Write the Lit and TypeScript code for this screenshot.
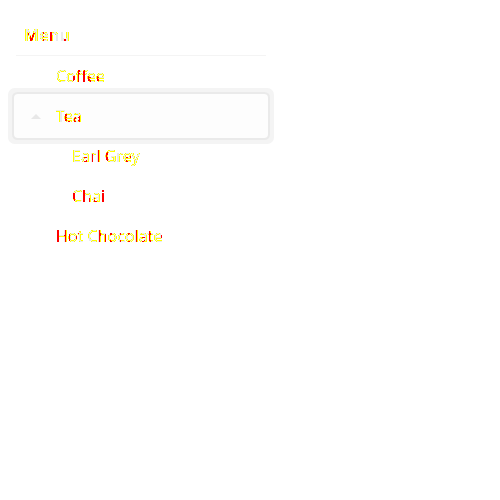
import { LitElement, html, svg, css } from "lit";
import { styleMap } from "lit/directives/style-map.js";

/** Changed columns of a label: start x, end x and, optionally, the top y. */
type Span = [number, number, number?];

interface Row { id: string; text: string; changed: Span[]; }

const rows: Row[] = [
  { id: "menu", text: "Menu", changed: [[3, 5, 10], [6, 11, 10], [14, 16, 10], [19, 20], [26, 28], [35, 37], [40, 42]] },
  { id: "coffee", text: "Coffee", changed: [[17, 20, 12], [22, 24], [27, 29], [32, 35, 12], [40, 43, 12]] },
  { id: "tea", text: "Tea", changed: [[9, 11, 10], [12, 14, 14], [18, 20, 13], [22, 24, 12]] },
  { id: "grey", text: "Earl Grey", changed: [[12, 15, 12], [20, 21], [26, 28], [34, 36, 8], [44, 45], [54, 56, 12], [58, 60, 12]] },
  { id: "chai", text: "Chai", changed: [[1, 3, 9], [11, 13], [17, 18, 14], [22, 25, 14], [30, 32]] },
  { id: "chocolate", text: "Hot Chocolate", changed: [[1, 3], [8, 10], [12, 14, 10], [20, 23], [43, 45], [49, 52], [54, 56], [64, 65], [72, 74], [80, 82], [86, 89, 13], [93, 95], [105, 106]] },
];

class AppRoot extends LitElement {
  static styles = css`
    :host { display: block; height: 500px; background: #fff; font: 16px/24px "Noto Sans", sans-serif; color: #000; }
    .defs { position: absolute; width: 0; height: 0; }
    .menu { width: 250px; padding: 16px; }
    .heading { box-sizing: border-box; height: 40px; padding: 7px 8px; font-weight: 600; letter-spacing: 0.4px; border-bottom: 1px solid #f4f4f4; }
    .item { box-sizing: border-box; display: flex; align-items: center; height: 40px; padding-left: 40px; }
    .child { padding-left: 56px; }
    .focused { padding-left: 15px; gap: 15px; border-radius: 2px; background: #fdfdfd;
      box-shadow: 0 0 0 2px #fdfdfd, 0 0 0 4px #eaeaea, 0 0 0 8px #f4f4f4; }
    .arrow { display: block; width: 10px; height: 5px; fill: #e8e8e8; }
    .label { display: inline-block; white-space: pre; }
  `;
  filterFor(row: Row) {
    return svg`
      <filter id=${row.id} filterUnits="userSpaceOnUse" x="0" y="0" width="200" height="24" color-interpolation-filters="sRGB">
        <feComponentTransfer in="SourceAlpha" result="any"><feFuncA type="discrete" tableValues="0 1 1 1 1 1 1 1 1 1"/></feComponentTransfer>
        <feFlood flood-color="#ebebeb" result="grayFill"/>
        <feComposite in="grayFill" in2="any" operator="in" result="gray"/>
        <feComponentTransfer in="SourceAlpha" result="mid"><feFuncA type="discrete" tableValues="0 0 1 1 1 1 1 0 0 0"/></feComponentTransfer>
        <feFlood flood-color="#ffff00" result="yellowFill"/>
        <feComposite in="yellowFill" in2="mid" operator="in" result="yellow"/>
        <feComponentTransfer in="SourceAlpha" result="strong"><feFuncA type="discrete" tableValues="0 0 0 0 1 1 1 1 1 1"/></feComponentTransfer>
        ${row.changed.map(([a, b, y = 0], i) => svg`<feFlood flood-color="#ff0000" x=${a} y=${y} width=${b - a} height=${24 - y} result=${"red" + i}/>`)}
        <feMerge result="redFill">${row.changed.map((_, i) => svg`<feMergeNode in=${"red" + i}/>`)}</feMerge>
        <feComposite in="redFill" in2="strong" operator="in" result="red"/>
        <feMerge><feMergeNode in="gray"/><feMergeNode in="yellow"/><feMergeNode in="red"/></feMerge>
      </filter>`;
  }
  label(row: Row) {
    return html`<span class="label" style=${styleMap({ filter: `url(#${row.id})` })}>${row.text}</span>`;
  }
  render() {
    const [menu, coffee, tea, grey, chai, chocolate] = rows;
    return html`
      <svg class="defs">${rows.map((row) => this.filterFor(row))}</svg>
      <div class="menu">
        <div class="heading">${this.label(menu)}</div>
        <div class="item">${this.label(coffee)}</div>
        <div class="item focused"><svg class="arrow" viewBox="0 0 10 5"><path d="M0 5 5 0l5 5z"/></svg>${this.label(tea)}</div>
        <div class="item child">${this.label(grey)}</div>
        <div class="item child">${this.label(chai)}</div>
        <div class="item">${this.label(chocolate)}</div>
      </div>`;
  }
}
customElements.define("app-root", AppRoot);
